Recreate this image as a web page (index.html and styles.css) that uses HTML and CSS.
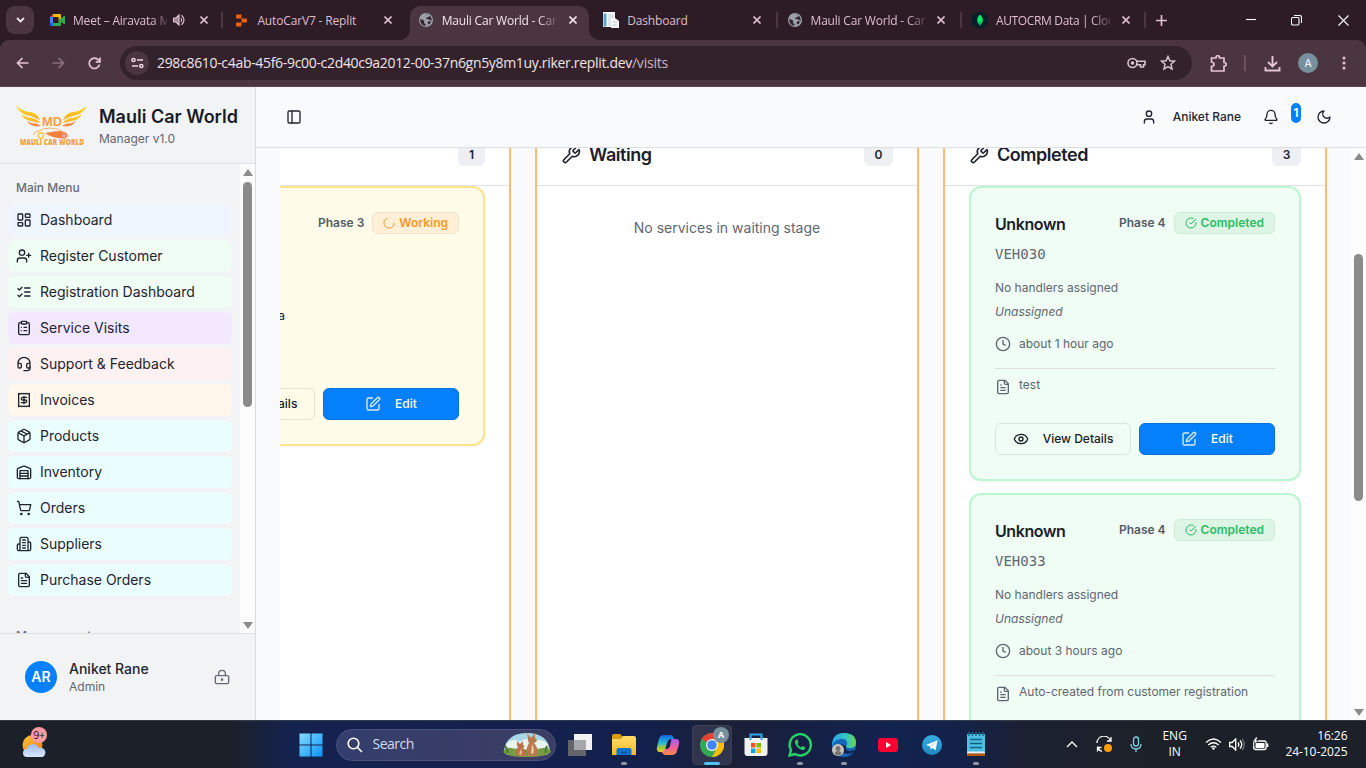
FILE: index.html
```html
<!DOCTYPE html>
<html lang="en">
<head>
<meta charset="utf-8">
<title>Mauli Car World</title>
<link rel="stylesheet" href="styles.css">
</head>
<body>
<svg class="defs" aria-hidden="true">
  <defs>
    <linearGradient id="gWing" x1="0" y1="0" x2="0" y2="1"><stop offset="0" stop-color="#fbd91c"/><stop offset="1" stop-color="#f9b02e"/></linearGradient>
    <linearGradient id="gWin" x1="0" y1="0" x2="1" y2="1"><stop offset="0" stop-color="#86dcff"/><stop offset="1" stop-color="#0a93f5"/></linearGradient>
    <linearGradient id="gSun" x1="0" y1="0" x2="1" y2="1"><stop offset="0" stop-color="#f8c53a"/><stop offset="1" stop-color="#f0780e"/></linearGradient>
    <linearGradient id="gCloud" x1="0" y1="0" x2="0" y2="1"><stop offset="0" stop-color="#9dbbf5"/><stop offset="1" stop-color="#dbe8fc"/></linearGradient>
    <linearGradient id="gCopA" x1="0" y1="0" x2="0" y2="1"><stop offset="0" stop-color="#1663e0"/><stop offset=".45" stop-color="#22b8d8"/><stop offset=".75" stop-color="#a6c935"/><stop offset="1" stop-color="#f7c92a"/></linearGradient>
    <linearGradient id="gCopB" x1="0" y1="0" x2="0" y2="1"><stop offset="0" stop-color="#a45bf0"/><stop offset=".5" stop-color="#ee5f9f"/><stop offset="1" stop-color="#f98a45"/></linearGradient>
    <linearGradient id="gEdge" x1="0" y1="0" x2="1" y2="0"><stop offset="0" stop-color="#2ba7e8"/><stop offset=".6" stop-color="#34c6c4"/><stop offset="1" stop-color="#6ad64b"/></linearGradient>
    <linearGradient id="gFold" x1="0" y1="0" x2="0" y2="1"><stop offset="0" stop-color="#ffdc6b"/><stop offset="1" stop-color="#f8b928"/></linearGradient>
    <linearGradient id="gTele" x1="0" y1="0" x2="0" y2="1"><stop offset="0" stop-color="#37aee2"/><stop offset="1" stop-color="#1e88c4"/></linearGradient>
  </defs>
  <symbol id="dash" viewBox="0 0 24 24"><rect x="3" y="3" width="7" height="9" rx="1"/><rect x="14" y="3" width="7" height="5" rx="1"/><rect x="14" y="12" width="7" height="9" rx="1"/><rect x="3" y="16" width="7" height="5" rx="1"/></symbol>
  <symbol id="userplus" viewBox="0 0 24 24"><path d="M16 21v-2a4 4 0 0 0-4-4H6a4 4 0 0 0-4 4v2"/><circle cx="9" cy="7" r="4"/><path d="M19 8v6M22 11h-6"/></symbol>
  <symbol id="checks" viewBox="0 0 24 24"><path d="m3 17 2 2 4-4M3 7l2 2 4-4M13 6h8M13 12h8M13 18h8"/></symbol>
  <symbol id="clip" viewBox="0 0 24 24"><rect x="8" y="2" width="8" height="4" rx="1"/><path d="M16 4h2a2 2 0 0 1 2 2v14a2 2 0 0 1-2 2H6a2 2 0 0 1-2-2V6a2 2 0 0 1 2-2h2M12 11h4M12 16h4M8 11h.01M8 16h.01"/></symbol>
  <symbol id="headset" viewBox="0 0 24 24"><path d="M3 11h3a2 2 0 0 1 2 2v3a2 2 0 0 1-2 2H5a2 2 0 0 1-2-2v-5Zm0 0a9 9 0 1 1 18 0m0 0v5a2 2 0 0 1-2 2h-1a2 2 0 0 1-2-2v-3a2 2 0 0 1 2-2h3Z"/><path d="M21 16v2a4 4 0 0 1-4 4h-5"/></symbol>
  <symbol id="receipt" viewBox="0 0 24 24"><path d="M4 2v20l2-1 2 1 2-1 2 1 2-1 2 1 2-1 2 1V2l-2 1-2-1-2 1-2-1-2 1-2-1-2 1Z"/><path d="M16 8h-6a2 2 0 1 0 0 4h4a2 2 0 1 1 0 4H8M12 17.5v-11"/></symbol>
  <symbol id="box" viewBox="0 0 24 24"><path d="M11 21.73a2 2 0 0 0 2 0l7-4A2 2 0 0 0 21 16V8a2 2 0 0 0-1-1.73l-7-4a2 2 0 0 0-2 0l-7 4A2 2 0 0 0 3 8v8a2 2 0 0 0 1 1.73zM12 22V12M3.3 7 12 12l8.7-5M7.5 4.27l9 5.15"/></symbol>
  <symbol id="ware" viewBox="0 0 24 24"><path d="M22 8.35V20a2 2 0 0 1-2 2H4a2 2 0 0 1-2-2V8.35A2 2 0 0 1 3.26 6.5l8-3.2a2 2 0 0 1 1.48 0l8 3.2A2 2 0 0 1 22 8.35ZM6 18h12M6 14h12"/><path d="M6 22V10h12v12"/></symbol>
  <symbol id="cart" viewBox="0 0 24 24"><circle cx="8" cy="21" r="1"/><circle cx="19" cy="21" r="1"/><path d="M2.05 2.05h2l2.66 12.42a2 2 0 0 0 2 1.58h9.78a2 2 0 0 0 1.95-1.57l1.65-7.43H5.12"/></symbol>
  <symbol id="bldg" viewBox="0 0 24 24"><path d="M6 22V4a2 2 0 0 1 2-2h8a2 2 0 0 1 2 2v18ZM6 12H4a2 2 0 0 0-2 2v6a2 2 0 0 0 2 2h2M18 9h2a2 2 0 0 1 2 2v9a2 2 0 0 1-2 2h-2M10 6h4M10 10h4M10 14h4M10 18h4"/></symbol>
  <symbol id="file" viewBox="0 0 24 24"><path d="M15 2H6a2 2 0 0 0-2 2v16a2 2 0 0 0 2 2h12a2 2 0 0 0 2-2V7Z"/><path d="M14 2v4a2 2 0 0 0 2 2h4M10 9H8M16 13H8M16 17H8"/></symbol>
  <symbol id="lock" viewBox="0 0 24 24"><circle cx="12" cy="16" r="1"/><rect x="2" y="10" width="20" height="12" rx="2"/><path d="M7 10V7a5 5 0 0 1 10 0v3"/></symbol>
  <symbol id="panel" viewBox="0 0 24 24"><rect x="3" y="3" width="18" height="18" rx="2"/><path d="M9 3v18"/></symbol>
  <symbol id="user" viewBox="0 0 24 24"><path d="M19 21v-2a4 4 0 0 0-4-4H9a4 4 0 0 0-4 4v2"/><circle cx="12" cy="7" r="4"/></symbol>
  <symbol id="bell" viewBox="0 0 24 24"><path d="M10.27 21a2 2 0 0 0 3.46 0M3.26 15.33A1 1 0 0 0 4 17h16a1 1 0 0 0 .74-1.67C19.41 13.96 18 12.5 18 8A6 6 0 0 0 6 8c0 4.5-1.41 5.96-2.74 7.33"/></symbol>
  <symbol id="moon" viewBox="0 0 24 24"><path d="M12 3a6 6 0 0 0 9 9 9 9 0 1 1-9-9Z"/></symbol>
  <symbol id="wrench" viewBox="0 0 24 24"><path d="M14.7 6.3a1 1 0 0 0 0 1.4l1.6 1.6a1 1 0 0 0 1.4 0l3.77-3.77a6 6 0 0 1-7.94 7.94l-6.91 6.91a2.12 2.12 0 0 1-3-3l6.91-6.91a6 6 0 0 1 7.94-7.94l-3.76 3.76z"/></symbol>
  <symbol id="okc" viewBox="0 0 24 24"><path d="M21.8 10A10 10 0 1 1 17 3.34"/><path d="m9 11 3 3L22 4"/></symbol>
  <symbol id="loader" viewBox="0 0 24 24"><path d="M9 2.500A10 10 0 1 0 22 12"/></symbol>
  <symbol id="clock" viewBox="0 0 24 24"><circle cx="12" cy="12" r="10"/><path d="M12 6v6l4 2"/></symbol>
  <symbol id="eye" viewBox="0 0 24 24"><path d="M2.06 12.35a1 1 0 0 1 0-.7 10.75 10.75 0 0 1 19.88 0 1 1 0 0 1 0 .7 10.75 10.75 0 0 1-19.88 0"/><circle cx="12" cy="12" r="3"/></symbol>
  <symbol id="edit" viewBox="0 0 24 24"><path d="M12 3H5a2 2 0 0 0-2 2v14a2 2 0 0 0 2 2h14a2 2 0 0 0 2-2v-7"/><path d="M18.38 2.62a1 1 0 0 1 3 3l-9 9a2 2 0 0 1-.86.5l-2.87.84a.5.5 0 0 1-.62-.62l.84-2.87a2 2 0 0 1 .5-.86z"/></symbol>
  <symbol id="x" viewBox="0 0 8 8"><path d="m.5.5 7 7m0-7-7 7"/></symbol>
  <symbol id="globe" viewBox="0 0 14 14"><circle cx="7" cy="7" r="7" fill="#9aa0a6"/><path d="M1.2 6.2 4 6.8l1.3 1.6-.3 1.5 1.6 1.3v1.5C3.500 12.700 1.100 10 1.200 6.200ZM6.200 1.400 8.500 1.300l2.300 1.500-1 1.200-2.200.4-.4 1.400 3.800 1 1.700 1.200c.2-3.700-2-6.500-5.200-6.700ZM8.800 8.800l1.800-.8 1.300.8-1 2-2 .7Z" fill="#35232e"/></symbol>
</svg>

<header class="tabstrip">
  <button class="tabsearch"><svg width="9" height="6" viewBox="0 0 9 6"><path d="M1 1l3.500 3.500L8 1"/></svg></button>
  <div class="tabs">
    <div class="tab first">
      <svg class="fav" width="15" height="12" viewBox="0 0 15 12"><path d="M3 0v3H0z" fill="#ea4335"/><path d="M3 0h7a1 1 0 0 1 1 1v3.500L8.500 6V3H3z" fill="#fbbc04"/><path d="M0 3h3v6H0z" fill="#4285f4"/><path d="M0 9h3v3H1a1 1 0 0 1-1-1z" fill="#1967d2"/><path d="M3 9h5.500V6L11 4.500 14 2q1-.5 1 .5v7q0 1-1 .5L11 8v3a1 1 0 0 1-1 1H3z" fill="#34a853"/></svg>
      <span class="tt fade">Meet – Airavata M</span>
      <svg class="aud" width="13" height="12" viewBox="0 0 13 12"><path class="spk" d="M.5 4v4h2.500l3 3V1L3 4z"/><path d="M8 4q1.500 2 0 4M8.500 1.300q5 4.700 0 9.400"/></svg>
      <svg class="cl"><use href="#x"/></svg>
    </div>
    <div class="tab">
      <svg class="fav" width="11" height="13" viewBox="0 0 11 13"><path d="M1 .5h4.500v4H1a1 1 0 0 1-1-1v-2a1 1 0 0 1 1-1zM5.500 4.500H10a1 1 0 0 1 1 1v2a1 1 0 0 1-1 1H5.500zM1 8.500h4.500v3a1 1 0 0 1-1 1H1a1 1 0 0 1-1-1v-2a1 1 0 0 1 1-1z" fill="#f26207"/></svg>
      <span class="tt">AutoCarV7 - Replit</span><svg class="cl"><use href="#x"/></svg>
    </div>
    <div class="tab active"><svg class="fav" width="14" height="14"><use href="#globe"/></svg><span class="tt fade">Mauli Car World - Car</span><svg class="cl"><use href="#x"/></svg></div>
    <div class="tab">
      <svg class="fav" width="16" height="16" viewBox="0 0 16 16"><path d="M0 0h12v15H0z" fill="#f6fafc"/><path d="M.5 1.500h3v13h-3z" fill="#5da3d3"/><path d="M5 2h6v12H5z" fill="#dfe6ea"/><path d="M8 6h4l4 3v7H8z" fill="#f3f4f5"/><path d="M10 10h4M10 13h4" stroke="#c3cbd0"/></svg>
      <span class="tt">Dashboard</span><svg class="cl"><use href="#x"/></svg>
    </div>
    <div class="tab sep"><svg class="fav" width="14" height="14"><use href="#globe"/></svg><span class="tt fade">Mauli Car World - Car</span><svg class="cl"><use href="#x"/></svg></div>
    <div class="tab sep">
      <svg class="fav" width="16" height="16" viewBox="0 0 16 16"><circle cx="8" cy="8" r="8" fill="#001e2b"/><path d="M8 2.500c4 4 3.500 8 0 10.500C4.500 10.500 4 6.500 8 2.500z" fill="#00ed64"/><path d="M8 9v5" stroke="#00a35c"/></svg>
      <span class="tt fade tight">AUTOCRM Data | Clou</span><svg class="cl"><use href="#x"/></svg>
    </div>
    <div class="newtab"><svg width="11" height="11" viewBox="0 0 11 11"><path d="M5.500 0v11M0 5.500h11"/></svg></div>
  </div>
  <div class="winctl">
    <svg width="10" height="10" viewBox="0 0 10 10"><path d="M0 4.500h10"/></svg>
    <svg width="11" height="11" viewBox="0 0 11 11"><rect x=".5" y="2.500" width="7.500" height="7.500" rx="1.200"/><path d="M3 .5h5.500a2 2 0 0 1 2 2V8"/></svg>
    <svg width="11" height="11" viewBox="0 0 11 11"><path d="m.5.5 10 10m0-10-10 10"/></svg>
  </div>
</header>

<div class="toolbar">
  <svg class="nav" width="13" height="12" viewBox="0 0 13 12"><path d="M12.500 6H1.500M6.500 1l-5 5 5 5"/></svg>
  <svg class="nav dim" width="13" height="12" viewBox="0 0 13 12"><path d="M.5 6h11M6.500 1l5 5-5 5"/></svg>
  <svg class="nav" width="13" height="13" viewBox="0 0 13 13"><path d="M11.500 7.500A5.200 5.200 0 1 1 10.500 3L12 4.500M12 .5v4.300H7.700"/></svg>
  <div class="omni">
    <span class="site"><svg width="13" height="12" viewBox="0 0 13 12"><circle cx="2.500" cy="3" r="1.600"/><path d="M6 3h6M1 9h6"/><circle cx="10.300" cy="9" r="1.600"/></svg></span>
    <span class="url">298c8610-c4ab-45f6-9c00-c2d40c9a2012-00-37n6gn5y8m1uy.riker.replit.dev<i>/visits</i></span>
    <svg class="key" width="19" height="12" viewBox="0 0 19 12"><circle cx="5.500" cy="6" r="4.500"/><circle class="solid" cx="5.500" cy="6" r="1.800"/><path d="M9.500 4.200H18v3.600h-1.500V10h-3V7.800h-4"/></svg>
    <svg class="star" width="16" height="16" viewBox="0 0 16 16"><path d="m8 1.500 1.900 4.300 4.600.4L11 9.300l1 4.600-4-2.400-4 2.400 1-4.600-3.500-3.100 4.600-.4z"/></svg>
  </div>
  <svg class="puz" width="17" height="17" viewBox="0 0 17 17"><path d="M1.500 3H6q0-2.300 1.800-2.300T9.500 3H14v4.500q2.300 0 2.300 1.700T14 11v5H1.500v-4.500q2.500-.3 2.500-2.200T1.500 7z"/></svg>
  <span class="vsep"></span>
  <svg class="dl" width="17" height="17" viewBox="0 0 17 17"><path d="M8.500 1v10M4 7l4.500 4.500L13 7M1.500 12v3.500h14V12"/></svg>
  <span class="prof">A</span>
  <svg class="dots" width="4" height="14" viewBox="0 0 4 14"><circle cx="2" cy="2" r="1.500"/><circle cx="2" cy="7" r="1.500"/><circle cx="2" cy="12" r="1.500"/></svg>
</div>

<div class="app">
  <aside class="side">
    <div class="brand">
      <svg class="logo" width="72" height="44" viewBox="0 0 72 44">
        <g fill="url(#gWing)"><path d="M0 2q8 6 15 6 7 2 9 8-6-3-10-4Q4 10 0 2z"/><path d="M5 10q6 4 11 4 6 1 8 5-5-1-9-2-7-1-10-7z"/><path d="M71 2q-8 6-15 6-7 2-9 8 6-3 10-4 10-2 14-10z"/><path d="M66 10q-6 4-11 4-6 1-8 5 5-1 9-2 7-1 10-7z"/></g>
        <g fill="#f58a45"><path d="M11 17q5 3 9 2.500 3 .5 5 2.500-10 2-14-5z"/><path d="M60 17q-5 3-9 2.500-3 .5-5 2.500 10 2 14-5z"/></g>
        <text x="36" y="22" textLength="20" lengthAdjust="spacingAndGlyphs" class="lmd">MD</text>
        <path d="M18 31q0-4 5-4 5-3 11-3 8 0 12 4 5 0 6 5" fill="none" stroke="#f9b25b"/><path d="M29 29q10-2 17-2 2 2 1 7-10 1-18-5z" fill="#f4813c"/><circle cx="25" cy="31.500" r="2.700" fill="none" stroke="#f8c84a" stroke-width="1.500"/><circle cx="48" cy="31.500" r="2.800" fill="#f6a089" stroke="#ef7b4a"/>
        <text x="36" y="41" textLength="64" lengthAdjust="spacingAndGlyphs" class="lname">MAULI CAR WORLD</text>
      </svg>
      <div><div class="bname">Mauli Car World</div><div class="bsub">Manager v1.0</div></div>
    </div>
    <div class="sscroll">
      <nav class="menu">
        <div class="mlabel">Main Menu</div>
        <a class="mi blue"><svg><use href="#dash"/></svg><span>Dashboard</span></a>
        <a class="mi green"><svg><use href="#userplus"/></svg><span>Register Customer</span></a>
        <a class="mi green"><svg><use href="#checks"/></svg><span>Registration Dashboard</span></a>
        <a class="mi purple"><svg><use href="#clip"/></svg><span>Service Visits</span></a>
        <a class="mi red"><svg><use href="#headset"/></svg><span>Support &amp; Feedback</span></a>
        <a class="mi orange"><svg><use href="#receipt"/></svg><span>Invoices</span></a>
        <a class="mi cyan"><svg><use href="#box"/></svg><span>Products</span></a>
        <a class="mi cyan"><svg><use href="#ware"/></svg><span>Inventory</span></a>
        <a class="mi cyan"><svg><use href="#cart"/></svg><span>Orders</span></a>
        <a class="mi cyan"><svg><use href="#bldg"/></svg><span>Suppliers</span></a>
        <a class="mi cyan"><svg><use href="#file"/></svg><span>Purchase Orders</span></a>
        <div class="mlabel second">Management</div>
      </nav>
      <div class="sbar"><i class="up"></i><b class="sthumb"></b><i class="down"></i></div>
    </div>
    <div class="suser">
      <span class="ava">AR</span>
      <div class="who"><div class="wn">Aniket Rane</div><div class="wr">Admin</div></div>
      <svg class="lk"><use href="#lock"/></svg>
    </div>
  </aside>

  <main class="main">
    <div class="top">
      <svg class="ic"><use href="#panel"/></svg>
      <span class="grow"></span>
      <svg class="ic"><use href="#user"/></svg><span class="uname">Aniket Rane</span>
      <svg class="ic"><use href="#bell"/></svg><span class="nb">1</span>
      <svg class="ic"><use href="#moon"/></svg>
    </div>
    <div class="scroll">
      <div class="view"><div class="board">
        <section class="col">
          <div class="ch"><span class="cnt one">1</span></div>
          <div class="cards">
            <article class="card yellow">
              <div class="r1"><h3></h3><span class="ph">Phase 3</span><span class="bd wk"><svg><use href="#loader"/></svg>Working</span></div>
              <div class="handler">a</div>
              <div class="btns"><a class="btn"><svg><use href="#eye"/></svg><span>View Details</span></a><a class="btn pri"><svg><use href="#edit"/></svg><span>Edit</span></a></div>
            </article>
          </div>
        </section>
        <section class="col">
          <div class="ch"><svg><use href="#wrench"/></svg><h2>Waiting</h2><span class="cnt">0</span></div>
          <p class="empty">No services in waiting stage</p>
        </section>
        <section class="col">
          <div class="ch"><svg><use href="#wrench"/></svg><h2>Completed</h2><span class="cnt">3</span></div>
          <div class="cards">
            <article class="card">
              <div class="r1"><h3>Unknown</h3><span class="ph">Phase 4</span><span class="bd"><svg><use href="#okc"/></svg>Completed</span></div>
              <div class="veh">VEH030</div>
              <div class="ln">No handlers assigned</div><div class="ln it">Unassigned</div>
              <div class="ln tm"><svg><use href="#clock"/></svg>about 1 hour ago</div>
              <div class="note"><svg><use href="#file"/></svg>test</div>
              <div class="btns"><a class="btn"><svg><use href="#eye"/></svg><span>View Details</span></a><a class="btn pri"><svg><use href="#edit"/></svg><span>Edit</span></a></div>
            </article>
            <article class="card">
              <div class="r1"><h3>Unknown</h3><span class="ph">Phase 4</span><span class="bd"><svg><use href="#okc"/></svg>Completed</span></div>
              <div class="veh">VEH033</div>
              <div class="ln">No handlers assigned</div><div class="ln it">Unassigned</div>
              <div class="ln tm"><svg><use href="#clock"/></svg>about 3 hours ago</div>
              <div class="note"><svg><use href="#file"/></svg>Auto-created from customer registration</div>
            </article>
          </div>
        </section>
      </div></div>
      <div class="sbar"><i class="up"></i><b class="mthumb"></b><i class="down"></i></div>
    </div>
  </main>
</div>

<footer class="task">
  <div class="wx"><svg width="26" height="30" viewBox="0 0 26 30"><circle cx="10.500" cy="17" r="10" fill="url(#gSun)"/><path d="M5 29a4 4 0 0 1 0-8 6 6 0 0 1 11.500-1 4.500 4.500 0 0 1 4 9z" fill="url(#gCloud)"/></svg><span class="wb">9+</span></div>
  <div class="tray-center">
    <span class="ti"><svg width="24" height="24" viewBox="0 0 24 24"><path d="M.5.5h11v11H.5zM12.500.5h11v11h-11zM.5 12.500h11v11H.5zM12.500 12.500h11v11h-11z" fill="url(#gWin)"/></svg></span>
    <div class="search">
      <svg width="16" height="16" viewBox="0 0 16 16"><circle cx="6.500" cy="6.500" r="5.300"/><path d="m10.500 10.500 4.500 4.500"/></svg><span>Search</span>
      <svg class="roo" width="48" height="26" viewBox="0 0 48 26"><path d="M1 18Q4 1 24 1t23 17l-3 5H4z" fill="#a8d8e8"/><path d="M3 12q7-7 14-2 7-6 12 0 8-5 16 2v8H3z" fill="#e9f3ef"/><path d="M0 20q3-5 8-4 16 3 32 0 6-1 8 4-4 5-24 5T0 20z" fill="#789a45"/><path d="M24 1l3 4h2l3-4 0 5q3 2 1 4l-2 1q5 5 3 13h-9q-3-7 1-13-2-3-1-5z" fill="#b97a4d"/><path d="M29 12q3 5 1 10l-2-1z" fill="#edc7a0"/><path d="M14 9l3 3 3-3 0 4q3 1 0 3 4 3 3 8h-8q-4-5 0-9-2-2-1-3z" fill="#b9744a"/><path d="M18 17q2 3 0 6l-2-1z" fill="#e6b88e"/><path d="M2 14q3 3 2 7M44 14q-2 4-1 7" stroke="#4c7a35" stroke-width="2" fill="none"/></svg>
    </div>
    <span class="ti"><svg width="26" height="24" viewBox="0 0 26 24"><path d="M7 1h18v16H7z" fill="#f2f2f3"/><path d="M1 7h18v16H1z" fill="#62646a"/><path d="M7 7h12v10H7z" fill="#a6a7aa"/></svg></span>
    <span class="ti run"><svg width="24" height="24" viewBox="0 0 24 24"><path d="M0 3a2 2 0 0 1 2-2h6l3 3v5H0z" fill="#d99d10"/><path d="M0 6h9l2-3h11a2 2 0 0 1 2 2v17H0z" fill="url(#gFold)"/><path d="M4.500 22v-5a2 2 0 0 1 2-2h11a2 2 0 0 1 2 2v5z" fill="#0f74cf"/><path d="M9 19.500h6" stroke="#0b5394" stroke-width="1.500"/></svg></span>
    <span class="ti"><svg width="24" height="24" viewBox="0 0 24 24"><path d="M8 2h6q3 0 4 4h-3q-3 0-4 4l-2 7q-1 3-4 2H4q-4 0-3-5l2-8q1-4 5-4z" fill="url(#gCopA)"/><path d="M15.500 6H20q4 0 3 5l-2 7q-1 4-5 4h-6q-3 0-4-3 2 0 3-3h2q2 0 3-3z" fill="url(#gCopB)"/></svg></span>
    <span class="ti sel"><svg width="24" height="24" viewBox="0 0 24 24"><circle cx="12" cy="12" r="12" fill="#34a853"/><path d="M12 12 1.600 6A12 12 0 0 1 24 12z" fill="#ea4335"/><path d="M12 6h10.400A12 12 0 0 1 12 24l5-9z" fill="#fbbc04"/><circle cx="12" cy="12" r="6" fill="#fff"/><circle cx="12" cy="12" r="4.800" fill="#4285f4"/></svg><b class="cb">A</b></span>
    <span class="ti"><svg width="24" height="24" viewBox="0 0 24 24"><path d="M6.500 6V1.500h11V6" fill="none" stroke="#2aa9ec" stroke-width="2"/><path d="M.5 5h23v15a3 3 0 0 1-3 3h-17a3 3 0 0 1-3-3z" fill="#f1f1f2"/><path d="M6.500 3.500V7M17.500 3.500V7" stroke="#2aa9ec" stroke-width="2"/><path d="M7 10h4.500v4.500H7z" fill="#f25022"/><path d="M12.500 10H17v4.500h-4.500z" fill="#7fba00"/><path d="M7 15.500h4.500V20H7z" fill="#00a4ef"/><path d="M12.500 15.500H17V20h-4.500z" fill="#ffb900"/></svg></span>
    <span class="ti run"><svg width="24" height="24" viewBox="0 0 24 24"><path d="M1.500 22.500 3 17A10.600 10.600 0 1 1 7 21z" fill="none" stroke="#25d366" stroke-width="2.400"/><path d="M8.500 6.500q-2 1-1.500 3.500 1.500 5 7 7 3 .5 3.500-2.500l-3-1.500-1.500 1.500q-2.500-1-3.500-3.500L10.500 10 9.500 6.500z" fill="#25d366"/></svg></span>
    <span class="ti run"><svg width="26" height="26" viewBox="0 0 26 26"><circle cx="13" cy="13" r="12" fill="#1766b8"/><path d="M1 14Q1 1 13 1t12 10q0 5-6 5-4 0-4-2 2-2 1-4-2-4-7-3-6 1-8 7z" fill="url(#gEdge)"/><path d="M10 12q-2 8 6 10 4 0 7-2 1 0 0-2-9 3-8-4z" fill="#12264f"/><circle cx="7" cy="18" r="6" fill="#c9c4be"/><circle cx="7" cy="16.500" r="2.500" fill="#77736f"/><path d="M3.500 22q0-3 3.500-3t3.500 3q-3 2.500-7 0z" fill="#77736f"/></svg></span>
    <span class="ti"><svg width="20" height="14" viewBox="0 0 20 14"><rect width="20" height="14" rx="3" fill="#ff0033"/><path d="M8 4v6l5-3z" fill="#fff"/></svg></span>
    <span class="ti"><svg width="20" height="20" viewBox="0 0 20 20"><circle cx="10" cy="10" r="10" fill="url(#gTele)"/><path d="M4 10 15.500 5.300 13.600 15.300 10.300 12.900 8.600 14.500 8.200 11.600z" fill="#fff"/><path d="m8.500 11.700 5-4.500" stroke="#8dc5e6"/></svg></span>
    <span class="ti run"><svg width="20" height="25" viewBox="0 0 20 25"><path d="M1 2h18v20H1z" fill="#4dbfe2"/><path d="M1 19.500h18v2H1z" fill="#eee"/><path d="M1 21.500h18V24H1z" fill="#b4560d"/><path d="M3 0v4M6.500 0v4M10 0v4M13.500 0v4M17 0v4" stroke="#156c8d" stroke-width="1.500"/><path d="M4 7.500h12M4 11.500h12M4 15.500h12" stroke="#0e6385" stroke-width="1.500"/></svg></span>
  </div>
  <div class="tray">
    <svg width="12" height="7" viewBox="0 0 12 7"><path d="m1 6 5-5 5 5"/></svg>
    <svg class="sync" width="17" height="17" viewBox="0 0 17 17"><path d="M1 7a7 7 0 0 1 13.500-2.500M15 1v4h-4M1.500 10.500A7 7 0 0 0 6 15.500M1.500 15.500v-4h4"/><circle cx="12" cy="12" r="4" class="or"/></svg>
    <svg class="mic" width="12" height="17" viewBox="0 0 12 17"><rect x="3.500" y="1" width="5" height="9" rx="2.500"/><path d="M1 8q0 5 5 5t5-5M6 13v3"/></svg>
    <span class="lang">ENG<br>IN</span>
    <span class="net">
      <svg width="17" height="12" viewBox="0 0 17 12"><path d="M1 4.500q7.500-7 15 0M3.300 7q5.200-4.500 10.400 0M5.700 9.300q2.800-2.200 5.600 0"/><circle cx="8.500" cy="10.500" r="1.200" fill="#fff" stroke="none"/></svg>
      <svg width="16" height="13" viewBox="0 0 16 13"><path d="M.7 4.500v4h2.500l3.500 3.500V1L3.200 4.500zM9 4.500q1.500 2 0 4M11 2.500q3.500 4 0 8"/><path d="M13 .8q4.500 5.700 0 11.400" opacity=".35"/></svg>
      <svg width="17" height="14" viewBox="0 0 17 14"><rect x="1.700" y="4" width="12.500" height="8.500" rx="2"/><path d="M3.500 6h9v5h-9z" fill="#fff" stroke="none"/><path d="M15.700 6.500v3.500"/><path d="M4 0 .5 5H3L2 8.500 6 3.500H4.500L5.500 0z" fill="#fff" stroke="#1c2129" stroke-width=".6"/></svg>
    </span>
    <span class="dt">16:26<br>24-10-2025</span>
  </div>
</footer>
</body>
</html>
```
FILE: styles.css
```css
* { box-sizing: border-box; }
body { margin: 0; width: 1366px; height: 768px; overflow: hidden; display: flex; flex-direction: column; background: #2d1b26; font-family: Inter, "Liberation Sans", sans-serif; color: #1f2430; }
svg { display: block; flex: none; fill: none; stroke: none; }
.defs { position: absolute; width: 0; height: 0; }
h2, h3, p { margin: 0; }

/* browser tabs */
.tabstrip { height: 40px; flex: none; display: flex; background: #2d1b26; color: #dfbfd0; font: 12px "Open Sans", "Noto Sans", sans-serif; }
.tabsearch { width: 28px; height: 28px; margin: 6px 7px 0 6px; padding: 0; border: 0; border-radius: 9px; background: #4a3540; display: grid; place-items: center; }
.tabsearch svg { stroke: #f3e4ec; stroke-width: 1.8; }
.tabs { display: flex; }
.tab { position: relative; width: 184.400px; height: 40px; padding: 0 17.500px 0 9px; display: flex; align-items: center; }
.fav { margin-right: 9px; }
.tab > .fav[width="16"] { margin-right: 8px; }
.tab > .fav[width="11"] { margin: 0 10px 0 2px; }
.tab > .fav[width="15"] { margin-right: 8px; }
.tt { flex: 1; white-space: nowrap; letter-spacing: -0.15px; }
.tt.fade { flex: none; width: 114px; letter-spacing: -0.2px; -webkit-mask-image: linear-gradient(90deg, #000 84%, #0003); mask-image: linear-gradient(90deg, #000 84%, #0003); }
.tt.tight { letter-spacing: -0.35px; }
.first .tt.fade { width: 94px; }
.aud { margin-left: 6px; stroke: #dfbfd0; stroke-width: 1.2; }
.spk { fill: #a08894; }
.cl { width: 8px; height: 8px; margin-left: auto; margin-right: 0; stroke: #dfbfd0; stroke-width: 1.6; }
.active { color: #f3e4ec; z-index: 1; }
.active .cl { stroke: #f3e4ec; }
.active::before { content: ""; position: absolute; z-index: -1; left: 0; top: 6px; width: 179px; height: 34px; border-radius: 10px 10px 0 0; background: #4a3540; }
.active::after { content: ""; position: absolute; z-index: -1; left: -10px; bottom: 0; width: 199px; height: 10px; background: radial-gradient(circle at 0 0, transparent 9.500px, #4a3540 10px) 0 0 / 10px 10px no-repeat, radial-gradient(circle at 10px 0, transparent 9.500px, #4a3540 10px) 189px 0 / 10px 10px no-repeat; }
.sep::before, .newtab::before, .first::after { content: ""; position: absolute; left: -3px; top: 12px; width: 2px; height: 16px; background: #4a3540; }
.first::after { left: 180px; }
.newtab { position: relative; width: 30px; padding-left: 8.500px; display: flex; align-items: center; }
.newtab svg { stroke: #dfbfd0; stroke-width: 1.7; }
.winctl { margin-left: auto; display: flex; align-items: center; gap: 35.500px; padding-right: 17.500px; }
.winctl svg { stroke: #fff; stroke-width: 1.1; }

/* browser toolbar */
.toolbar { height: 47px; flex: none; background: #4a3540; border-radius: 9px 9px 0 0; border-bottom: 1px solid #59444f; display: flex; align-items: center; padding-left: 16px; }
.nav { stroke: #e5c4d6; stroke-width: 1.7; margin-right: 23px; }
.nav.dim { stroke: #8b6f7e; }
.nav:nth-child(3) { margin-right: 19px; }
.omni { width: 1072px; height: 34px; border-radius: 17px; background: #33212b; display: flex; align-items: center; padding-left: 5px; }
.site { width: 24px; height: 24px; border-radius: 50%; background: #4a3540; display: grid; place-items: center; margin-right: 8px; }
.site svg { stroke: #eed8e3; stroke-width: 1.5; }
.url { flex: 1; font: 14px "Open Sans", "Noto Sans", sans-serif; color: #f0e4ea; white-space: nowrap; letter-spacing: -.32px; margin-top: -1px; }
.url i { font-style: normal; color: #cdb6c1; letter-spacing: -.2px; }
.key { stroke: #d8c5ce; stroke-width: 1.6; margin-right: 14px; }
.solid { fill: #d8c5ce; stroke: none; }
.star { stroke: #d8c5ce; stroke-width: 1.5; margin-right: 16px; }
.puz { stroke: #e5c4d6; stroke-width: 1.7; margin-left: 18px; }
.vsep { width: 2px; height: 16px; background: #6b5360; margin: 0 17.500px 0 17px; }
.dl { stroke: #e5c4d6; stroke-width: 1.9; }
.prof { width: 20px; height: 20px; border-radius: 50%; background: #78909c; color: #fff; font-size: 10.500px; display: grid; place-items: center; margin: 0 24px 0 17.500px; }
.dots { fill: #e5c4d6; }

/* sidebar */
.app { height: 633px; flex: none; display: flex; background: #f9fafb; }
.side { width: 256px; flex: none; border-right: 1px solid #d9dbdf; background: #f2f3f5; display: flex; flex-direction: column; }
.brand { height: 77px; flex: none; border-bottom: 1px solid #dddfe3; display: flex; align-items: center; padding: 0 0 0 16px; gap: 11px; }
.logo { margin-top: 2px; }
.lmd { font: 700 13px "Liberation Sans", sans-serif; fill: #f7a23b; text-anchor: middle; }
.lname { font: 800 8px "Open Sans", sans-serif; fill: #f5a040; text-anchor: middle; }
.bname { font-size: 18px; font-weight: 600; line-height: 24px; color: #171c26; white-space: nowrap; margin-top: 2px; }
.bsub { font-size: 12px; line-height: 16px; margin-top: 2px; color: #5f6673; }
.sscroll { height: 469px; flex: none; display: flex; overflow: hidden; }
.menu { width: 240px; flex: none; padding: 8px; display: flex; flex-direction: column; gap: 4px; }
.mlabel { height: 32px; line-height: 32px; padding-left: 8px; margin-bottom: -4px; font-size: 12px; font-weight: 500; color: #666b77; }
.mi { height: 32px; flex: none; border-radius: 6px; display: flex; align-items: center; gap: 8px; padding-left: 8px; font-size: 14px; }
.mi span { line-height: 20px; }
.mi svg { width: 16px; height: 16px; stroke: #1f2430; stroke-width: 2; stroke-linecap: round; stroke-linejoin: round; }
.second { margin-top: 20px; flex: none; }
.blue { background: #eff6ff; } .green { background: #f0fdf4; } .purple { background: #f3e8ff; } .red { background: #fef1f1; } .orange { background: #fff6ec; } .cyan { background: #ebfeff; }
.sbar { width: 15px; flex: none; background: #fcfcfc; display: flex; flex-direction: column; align-items: center; padding: 5px 0 4px; }
.up, .down { border: 5px solid transparent; border-top: 0; border-bottom: 7px solid #8b8b8b; flex: none; }
.down { border-bottom: 0; border-top: 7px solid #8b8b8b; margin-top: auto; }
.sthumb, .mthumb { width: 9px; height: 225px; margin-top: 6px; border-radius: 5px; background: #8b8b8b; flex: none; }
.mthumb { height: 247px; margin-top: 94px; }
.suser { flex: 1; border-top: 1px solid #dddfe3; display: flex; align-items: center; padding: 0 25px; }
.ava { width: 32px; height: 32px; border-radius: 50%; background: #0580fb; color: #fff; font-size: 14px; line-height: 20px; font-weight: 600; display: grid; place-items: center; margin-right: 12px; }
.who { flex: 1; }
.wn { font-size: 14px; font-weight: 500; line-height: 20px; }
.wr { font-size: 12px; line-height: 16px; color: #5f6673; }
.lk { width: 16px; height: 16px; stroke: #666b77; stroke-width: 2; }

/* page header */
.main { flex: 1; min-width: 0; display: flex; flex-direction: column; }
.top { height: 61px; flex: none; border-bottom: 1px solid #dcdfe3; display: flex; align-items: center; padding: 0 34px 0 30px; font-size: 12px; line-height: 16px; font-weight: 500; }
.grow { flex: 1; }
.ic { width: 16px; height: 16px; stroke: #1f2430; stroke-width: 2; stroke-linecap: round; stroke-linejoin: round; }
.uname { margin: 0 22px 0 16px; white-space: nowrap; }
.nb { width: 10px; height: 20px; margin: -8px 15px 0 12px; border-radius: 5px; background: #0580fb; color: #fff; font-weight: 600; display: grid; place-items: center; padding-bottom: 1px; }

/* board */
.scroll { flex: 1; min-height: 0; display: flex; overflow: hidden; }
.view { flex: 1; overflow: hidden; margin: 0 24px; height: 572px; min-width: 0; }
.board { display: flex; justify-content: flex-end; gap: 24px; margin-top: -24px; height: 620px; }
.col { width: 384px; flex: none; background: #fff; border: solid #fdba74; border-width: 0 2px; }
.ch { height: 62px; border-bottom: 1px solid #dfe1e4; display: flex; align-items: center; padding: 0 24px; }
.ch svg { width: 20px; height: 20px; stroke: #1f2430; stroke-width: 2; stroke-linecap: round; stroke-linejoin: round; }
.ch h2 { flex: 1; font-size: 18px; font-weight: 600; letter-spacing: -.45px; margin-left: 8px; color: #1b202b; }
.cnt { width: 29px; height: 22px; text-align: center; border-radius: 6px; background: #eeeff3; font-size: 12px; font-weight: 600; line-height: 22px; margin-left: auto; }
.one { width: 27px; }
.cards { padding: 0 24px; display: flex; flex-direction: column; gap: 12px; }
.card { height: 295px; flex: none; border: 2px solid #bbf7d0; border-radius: 12px; background: #f0fdf4; padding: 24px; box-shadow: 0 1px 2px #0000000d; }
.yellow { height: 260px; background: #fefbe8; border-color: #fde68a; }
.r1 { display: flex; align-items: flex-start; height: 28px; }
.r1 h3 { flex: 1; font-size: 16px; font-weight: 600; line-height: 25px; letter-spacing: -.4px; color: #1b202b; }
.ph { font-size: 12px; font-weight: 600; line-height: 22px; color: #555b67; margin-right: 8px; }
.bd { height: 22px; border: 1px solid #cfe9d8; border-radius: 6px; background: #dcf5e5; color: #2dbd64; font-size: 12px; font-weight: 600; line-height: 20px; display: flex; align-items: center; gap: 4px; padding: 0 10px; }
.bd svg { width: 12px; height: 12px; stroke: currentColor; stroke-width: 2; }
.wk { background: #feefd6; border-color: #f2e3c8; color: #f9982d; }
.handler { width: 106px; margin-top: 66px; height: 20px; line-height: 20px; font-size: 12px; text-align: right; margin-bottom: 62px; white-space: nowrap; }
.veh { font: 14px/20px "DejaVu Sans Mono", monospace; color: #5f6673; margin-top: 4px; height: 32px; }
.ln { font-size: 12px; line-height: 24px; height: 24px; color: #5f6673; }
.it { font-style: italic; }
.tm { margin-top: 8px; display: flex; align-items: center; gap: 8px; }
.tm svg, .note svg { width: 16px; height: 16px; stroke: #5f6673; stroke-width: 2; }
.note { margin-top: 12px; border-top: 1px solid #dcdfe0; padding-top: 8px; height: 55px; display: flex; gap: 8px; font-size: 12px; line-height: 16px; color: #5f6673; }
.note svg { margin-top: 2px; }
.btns { display: grid; grid-template-columns: 136px 136px; gap: 8px; }
.btn { height: 32px; border: 1px solid #d9e4dd; border-radius: 6px; display: flex; align-items: center; justify-content: center; gap: 14px; font-size: 12px; line-height: 16px; font-weight: 500; color: #171c26; white-space: nowrap; }
.yellow .btn { border-color: #e6e2d1; }
.btn svg { width: 16px; height: 16px; stroke: currentColor; stroke-width: 2; }
.btn.pri, .yellow .btn.pri { background: #0580fb; border-color: #0a70da; color: #fff; }
.pri svg { opacity: .85; }
.empty { text-align: center; font-size: 14px; line-height: 20px; margin-top: 32px; color: #5f6673; }

/* taskbar */
.task { height: 48px; flex: none; border-top: 1px solid #343a45; display: flex; align-items: center; position: relative; background: linear-gradient(90deg, #1c2129 0, #1c2129 230px, #142250 290px, #14204c 660px, #1b2035 720px, #172044 800px, #12234f 890px, #14224a 960px, #1c2130 1030px, #1c2129 1150px); color: #fff; font: 12px/16px "Open Sans", sans-serif; }
.wx { position: relative; width: 289px; padding: 0 0 0 22px; flex: none; }
.wx svg { margin-top: -3px; }
.wb { position: absolute; left: 31px; top: -4px; width: 16px; height: 16px; border-radius: 50%; background: #ff99a4; color: #111; font-size: 10.500px; line-height: 16px; text-align: center; letter-spacing: -.3px; }
.tray-center { display: flex; align-items: center; }
.ti { position: relative; width: 44px; height: 47px; display: grid; place-items: center; }
.search { width: 220px; height: 32px; margin: 0 2px 0 3px; border-radius: 16px; border: 1px solid #4a527b; background: linear-gradient(90deg, #343e6c, #3c3d64); display: flex; align-items: center; padding: 0 4px 0 10px; gap: 9.500px; font-size: 14px; letter-spacing: -.5px; color: #d9dbe6; }
.search span { margin-top: -1px; }
.search svg:first-child { stroke: #fff; stroke-width: 1.6; }
.roo { margin-left: auto; }
.run::after, .sel::after { content: ""; position: absolute; left: 19px; bottom: 3px; width: 6px; height: 3px; border-radius: 2px; background: #9297a5; }
.sel::before { content: ""; position: absolute; inset: 4px 2px 3px; border: 1px solid #3a3f54; border-radius: 4px; background: #30354d; }
.sel::after { width: 16px; left: 14px; background: #4cc2ff; }
.sel svg { position: relative; }
.cb { position: absolute; left: 23px; top: 6px; width: 16px; height: 16px; border-radius: 50%; background: #78909c; text-align: center; font-size: 9px; line-height: 16px; }
.tray { flex: 1; display: flex; align-items: center; justify-content: flex-end; padding-right: 18.500px; padding-bottom: 1px; text-align: right; }
.tray svg { stroke: #fff; stroke-width: 1.3; }
.sync { margin: 0 17px 0 18px; }
.tray .or { fill: #ff9a0a; stroke: none; }
.tray .mic { stroke: #7fd3e6; }
.lang { text-align: center; margin: 0 18px 0 20px; }
.net { display: flex; align-items: center; gap: 7px; margin-right: 16.500px; }
.dt { letter-spacing: -.05px; }
```
